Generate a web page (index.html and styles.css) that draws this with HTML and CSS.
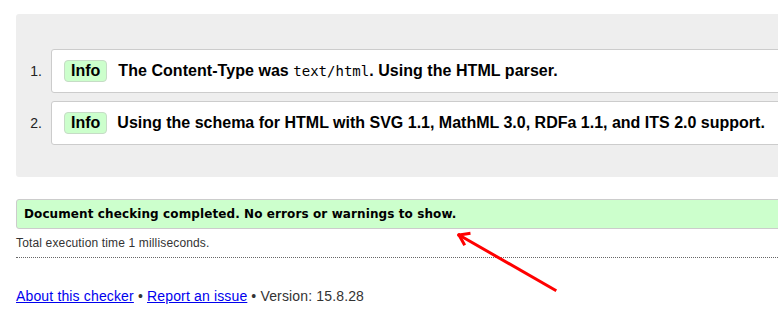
FILE: index.html
```html
<!DOCTYPE html>
<html lang="en">
<head>
<meta charset="utf-8">
<title>Validator results</title>
<link rel="stylesheet" href="styles.css">
</head>
<body>
<div class="page">
  <div class="results">
    <ol class="messages">
      <li class="msg">
        <span class="num">1.</span>
        <div class="card">
          <span class="badge">Info</span>
          <span class="text">The Content-Type was <code>text/html</code>. Using the HTML parser.</span>
        </div>
      </li>
      <li class="msg">
        <span class="num">2.</span>
        <div class="card">
          <span class="badge">Info</span>
          <span class="text text-tight">Using the schema for HTML with SVG 1.1, MathML 3.0, RDFa 1.1, and ITS 2.0 support.</span>
        </div>
      </li>
    </ol>
  </div>
  <p class="success">Document checking completed. No errors or warnings to show.</p>
  <p class="stats">Total execution time 1 milliseconds.</p>
  <p class="footer"><a href="#">About this checker</a> • <a href="#">Report an issue</a> • Version: 15.8.28</p>
</div>
<svg class="arrow" width="120" height="80" viewBox="0 0 120 80">
  <path d="M108 70 L12 15" />
  <path d="M12 15 L22 13.5 M12 15 L17 24" />
</svg>
</body>
</html>
```

FILE: styles.css
```css
html, body {
  margin: 0;
  padding: 0;
  overflow: hidden;
  background: #fff;
}
body {
  font-family: "Liberation Sans", Arial, sans-serif;
  color: #000;
  position: relative;
  height: 322px;
}
.page {
  width: 820px;
  padding: 14px 0 0 16px;
}
.results {
  background: #eeeeee;
  border-radius: 3px;
  padding: 35px 0 32px 0;
}
.messages {
  list-style: none;
  margin: 0;
  padding: 0;
  display: flex;
  flex-direction: column;
  gap: 8px;
}
.msg {
  display: flex;
  align-items: center;
}
.num {
  width: 26px;
  padding-right: 9px;
  text-align: right;
  font-size: 14px;
  color: #222;
}
.card {
  flex: 1;
  background: #fff;
  border: 1px solid #cccccc;
  border-radius: 3px;
  height: 42px;
  display: flex;
  align-items: center;
  padding-left: 12px;
}
.badge {
  background: #ccffcc;
  border: 1px solid #c6dcc6;
  border-radius: 4px;
  font-weight: bold;
  font-size: 16px;
  line-height: 20px;
  padding: 0 6px;
  color: #000;
}
.text {
  margin-left: 11px;
  font-weight: bold;
  font-size: 16px;
  letter-spacing: 0.05px;
}
.text-tight {
  margin-left: 10px;
  letter-spacing: 0;
}
.text code {
  font-family: "DejaVu Sans Mono", monospace;
  font-weight: normal;
  font-size: 14px;
  letter-spacing: 0;
}
.success {
  margin: 22px 0 0 0;
  background: #ccffcc;
  border: 1px solid #cccccc;
  border-radius: 3px;
  padding: 0 0 0 7px;
  height: 28px;
  line-height: 29px;
  font-family: "DejaVu Sans", Verdana, sans-serif;
  font-weight: bold;
  font-size: 12px;
  letter-spacing: 0.1px;
}
.stats {
  margin: 7px 0 0 0;
  font-size: 12px;
  line-height: 14px;
  letter-spacing: 0.15px;
  color: #333;
  padding-bottom: 7px;
  border-bottom: 1px dotted #666;
}
.footer {
  margin: 30px 0 0 0;
  font-size: 14px;
  letter-spacing: 0.15px;
  color: #333;
}
.footer a {
  color: #0000ee;
}
.arrow {
  position: absolute;
  left: 447px;
  top: 220px;
  fill: none;
  stroke: #ff0000;
  stroke-width: 3;
  stroke-linecap: square;
}
```
